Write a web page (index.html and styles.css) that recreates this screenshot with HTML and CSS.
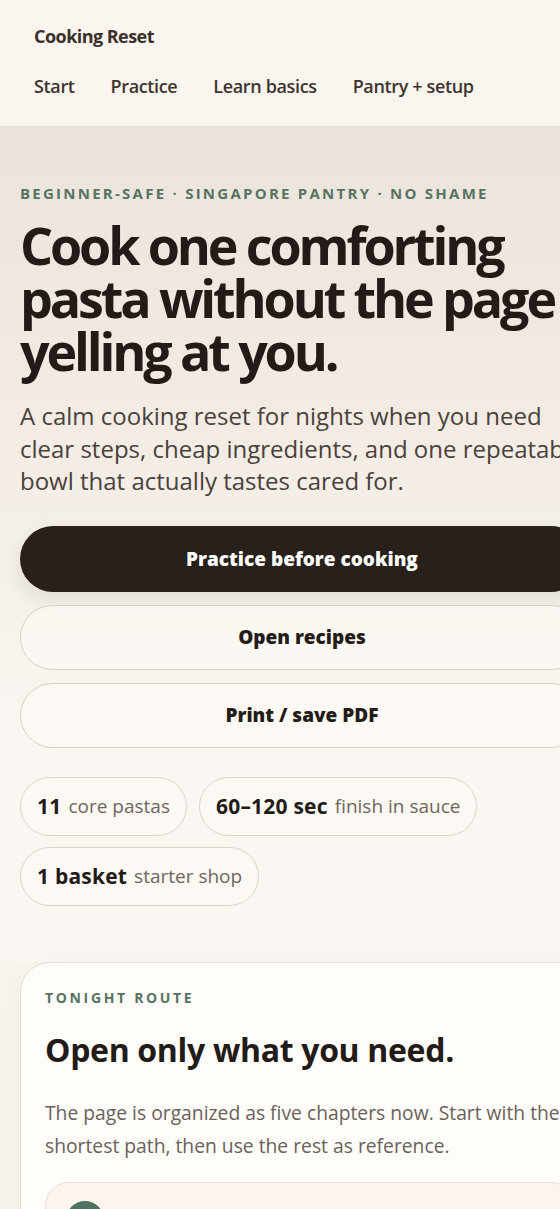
FILE: index.html
```html
<!DOCTYPE html>
<html lang="en">
<head>
<meta charset="utf-8">
<title>Cooking Reset</title>
<link rel="stylesheet" href="styles.css">
</head>
<body>
<div class="page">
  <header class="site-header">
    <div class="brand">Cooking Reset</div>
    <nav class="nav">
      <a href="#start">Start</a>
      <a href="#practice">Practice</a>
      <a href="#basics">Learn basics</a>
      <a href="#pantry">Pantry + setup</a>
    </nav>
  </header>
  <main>
    <section class="hero">
      <p class="eyebrow">Beginner-safe · Singapore pantry · No shame</p>
      <h1 class="headline">Cook one comforting pasta without the page yelling at you.</h1>
      <p class="lede">A calm cooking reset for nights when you need clear steps, cheap ingredients, and one repeatable bowl that actually tastes cared for.</p>
      <div class="actions">
        <a class="btn btn-primary" href="#practice">Practice before cooking</a>
        <a class="btn btn-ghost" href="#recipes">Open recipes</a>
        <a class="btn btn-ghost" href="#print">Print / save PDF</a>
      </div>
      <div class="stats">
        <span class="chip"><b>11</b> core pastas</span>
        <span class="chip"><b>60–120 sec</b> finish in sauce</span>
        <span class="chip"><b>1 basket</b> starter shop</span>
      </div>
    </section>
    <section class="route-card">
      <p class="eyebrow eyebrow-sm">Tonight route</p>
      <h2 class="card-title">Open only what you need.</h2>
      <p class="card-text">The page is organized as five chapters now. Start with the shortest path, then use the rest as reference.</p>
      <div class="step">
        <span class="step-dot">1</span>
        <span class="step-text">Practice before cooking</span>
      </div>
    </section>
  </main>
</div>
</body>
</html>
```
FILE: styles.css
```css
html, body {
  margin: 0;
  padding: 0;
  overflow-x: hidden;
}
body {
  background: #f9f4ee;
  font-family: "Open Sans", "Noto Sans", sans-serif;
  color: #221b17;
}
.page {
  width: 604px;
}
.site-header {
  background: #faf5ef;
  padding: 24px 34px 28px;
  border-bottom: 1px solid #e6ded4;
}
.brand {
  font-size: 18px;
  line-height: 24px;
  font-weight: 700;
  letter-spacing: -0.03em;
  color: #3a302a;
}
.nav {
  display: flex;
  gap: 36px;
  margin-top: 26px;
}
.nav a {
  font-size: 18px;
  line-height: 24px;
  font-weight: 600;
  color: #3d342e;
  text-decoration: none;
  letter-spacing: -0.02em;
}
.hero {
  padding: 56px 20px 56px;
  background: linear-gradient(180deg, #ebe4dc 0%, #f3ede6 40%, #faf6f1 75%, #faf6f1 100%);
}
.eyebrow {
  margin: 0;
  font-size: 15px;
  line-height: 20px;
  font-weight: 700;
  text-transform: uppercase;
  letter-spacing: 0.15em;
  color: #567461;
}
.headline {
  margin: 15px 0 0;
  font-size: 52px;
  line-height: 53px;
  font-weight: 700;
  letter-spacing: -0.06em;
  color: #221b17;
}
.lede {
  margin: 23px 0 0;
  font-size: 24px;
  line-height: 32.5px;
  color: #4a413b;
}
.actions {
  display: flex;
  flex-direction: column;
  gap: 13px;
  margin-top: 28px;
}
.btn {
  display: flex;
  align-items: center;
  justify-content: center;
  height: 65px;
  border-radius: 40px;
  font-size: 19px;
  font-weight: 800;
  text-decoration: none;
  box-sizing: border-box;
}
.btn-primary {
  background: #27201b;
  color: #ffffff;
  height: 66px;
  box-shadow: 0 8px 20px rgba(60, 40, 25, 0.10);
}
.btn-ghost {
  border: 1px solid #d9cfc3;
  background: rgba(255, 253, 249, 0.45);
  color: #231c18;
}
.stats {
  display: flex;
  flex-wrap: wrap;
  gap: 11px 12px;
  margin-top: 29px;
}
.chip {
  display: inline-flex;
  align-items: center;
  gap: 7px;
  height: 59px;
  padding: 0 16px;
  box-sizing: border-box;
  border: 1px solid #ddd4c9;
  border-radius: 30px;
  font-size: 19px;
  color: #6f665f;
  background: rgba(255, 253, 249, 0.35);
}
.chip b {
  font-size: 21px;
  font-weight: 700;
  letter-spacing: 0.01em;
  color: #221b17;
}
.route-card {
  margin: 0 0 0 20px;
  width: 580px;
  background: #fffdf9;
  border: 1px solid #e6ddd1;
  border-radius: 30px;
  padding: 25px 24px 30px;
  box-sizing: border-box;
  box-shadow: 0 10px 30px rgba(80, 60, 40, 0.05);
}
.eyebrow-sm {
  font-size: 14px;
  letter-spacing: 0.19em;
  color: #567461;
}
.card-title {
  margin: 22px 0 0;
  font-size: 32px;
  line-height: 40px;
  font-weight: 700;
  letter-spacing: -0.01em;
  color: #221b17;
}
.card-text {
  margin: 26px 0 0;
  font-size: 19.3px;
  line-height: 33px;
  color: #6a615a;
}
.step {
  margin-top: 20px;
  display: flex;
  align-items: center;
  gap: 16px;
  padding: 18px 20px;
  border: 1px solid #e8dfd3;
  border-radius: 24px;
  background: #fbf5ee;
}
.step-dot {
  width: 38px;
  height: 38px;
  border-radius: 50%;
  background: #4f7360;
  color: #fff;
  display: flex;
  align-items: center;
  justify-content: center;
  font-weight: 700;
  font-size: 16px;
}
.step-text {
  font-size: 18px;
  font-weight: 700;
}
```
